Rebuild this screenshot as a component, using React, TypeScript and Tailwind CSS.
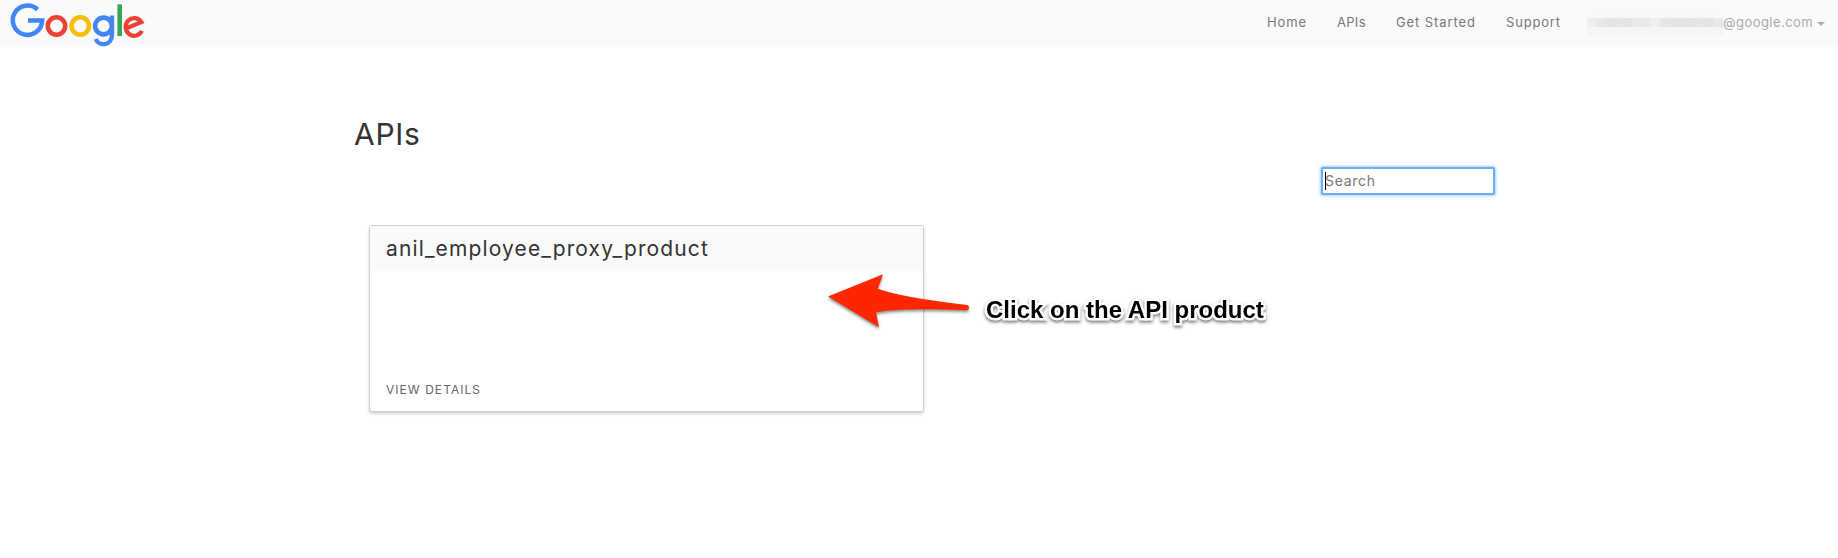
function GoogleLogo() {
  return (
    <svg width="150" height="47" viewBox="0 0 150 47" fill="none" aria-label="Google" className="block shrink-0">
      <path d="M37.6 9.5 A14.7 14.7 0 1 0 42.2 20.4 H28" stroke="#4285f4" strokeWidth="4.5" />
      <circle cx="56.5" cy="26" r="8.7" stroke="#ea4335" strokeWidth="4.6" />
      <circle cx="80.3" cy="26" r="8.7" stroke="#fbbc05" strokeWidth="4.6" />
      <circle cx="103.5" cy="26" r="8.4" stroke="#4285f4" strokeWidth="4.6" />
      <path d="M112 15.6 V34.5 C112 46.5 98.5 46.4 95.7 38.9" stroke="#4285f4" strokeWidth="4.3" />
      <path d="M119.7 4.3 V36" stroke="#34a853" strokeWidth="4.6" />
      <path d="M127 28 L141.4 22.1 A8.6 8.8 0 1 0 141.9 30.9" stroke="#ea4335" strokeWidth="4.2" />
    </svg>
  );
}

const redacted = [
  "bg-[#eeeeee]", "bg-[#e8e8e8]", "bg-[#e4e4e4]", "bg-[#e6e6e6]", "bg-[#e3e3e3]",
  "bg-[#e9e9e9]", "bg-[#e8e8e8]", "bg-[#eeeeee]", "bg-[#e6e6e6]", "bg-[#e4e4e4]",
  "bg-[#e5e5e5]", "bg-[#e3e3e3]", "bg-[#e6e6e6]", "bg-[#e4e4e4]", "bg-[#e8e8e8]",
];

function Header() {
  return (
    <header className="flex h-[47px] justify-between bg-[#fafafa] text-[13px] text-[#777]">
      <GoogleLogo />
      <nav className="flex h-[45px] items-center whitespace-nowrap">
        <a className="w-[70px] tracking-[0.9px]">Home</a>
        <a className="w-[59px] tracking-[0.3px]">APIs</a>
        <a className="w-[110px] tracking-[0.9px]">Get Started</a>
        <a className="w-[81px] tracking-[0.8px]">Support</a>
        <div className="flex w-[136px] flex-col">
          <div className="h-2 bg-[#f8f8f8]" />
          <div className="flex h-[9px]">
            {redacted.map((shade, i) => (
              <span key={i} className={"flex-1 " + shade} />
            ))}
          </div>
          <div className="h-2 bg-[#f5f5f5]" />
        </div>
        <a className="w-[94px] tracking-[0.45px] text-[#aaa]">@google.com</a>
        <svg width="8" height="4" viewBox="0 0 8 4" className="mt-[3px] mr-[13px]">
          <path d="M0 0H8L4 4Z" fill="#aaa" />
        </svg>
      </nav>
    </header>
  );
}

function Callout() {
  return (
    <div className="absolute top-[268px] left-[824px] flex">
      <svg width="152" height="66" viewBox="0 0 152 66" className="drop-shadow-[0_2px_1.5px_rgba(0,0,0,0.45)]">
        <path
          d="M4 28.5 L59 6.3 L53.7 20.7 C78 29 112 33 142.5 37 C146 37.5 146 42 142 42.2 C112 41.2 78 40 52 44.2 L55 59.2 Z"
          fill="#ff2600"
        />
      </svg>
      <span className="mt-[28px] ml-[10px] font-['Liberation_Sans',sans-serif] text-[24px] leading-7 font-bold whitespace-nowrap text-black [paint-order:stroke_fill] [-webkit-text-stroke:5px_white] drop-shadow-[0_2px_1.5px_rgba(0,0,0,0.5)]">
        Click on the API product
      </span>
    </div>
  );
}

export default function App() {
  return (
    <div className="relative h-[558px] overflow-hidden bg-white font-['Inter',sans-serif]">
      <Header />
      <main className="mx-auto w-[1140px] pt-[69px]">
        <h1 className="ml-[5px] text-[30px] leading-9 tracking-[0.7px] text-[#333]">APIs</h1>
        <div className="mt-[15px] -mr-[6px] flex h-[28px] justify-end">
          <label className="flex h-[28px] w-[174px] items-center rounded-[2px] border-2 border-[#6eaef5] bg-white pl-[2px] text-sm text-[#777] shadow-[0_0_3px_1px_#a4d0ff]">
            <span className="h-[18px] w-px bg-black" />
            <span className="-ml-px tracking-[0.7px]">Search</span>
          </label>
        </div>
        <section className="mt-[30px] ml-5 flex h-[187px] w-[555px] flex-col justify-between rounded-[3px] border border-[#d0d0d0] bg-white shadow-[0_2px_3px_rgba(0,0,0,0.18)]">
          <h2 className="h-[45px] bg-[#fafafa] pt-[9px] pl-4 text-[21px] leading-7 tracking-[1.13px] text-[#333]">anil_employee_proxy_product</h2>
          <a className="mb-[13px] pl-4 text-[12px] leading-4 tracking-[1.05px] text-[#666]">VIEW DETAILS</a>
        </section>
      </main>
      <Callout />
    </div>
  );
}
